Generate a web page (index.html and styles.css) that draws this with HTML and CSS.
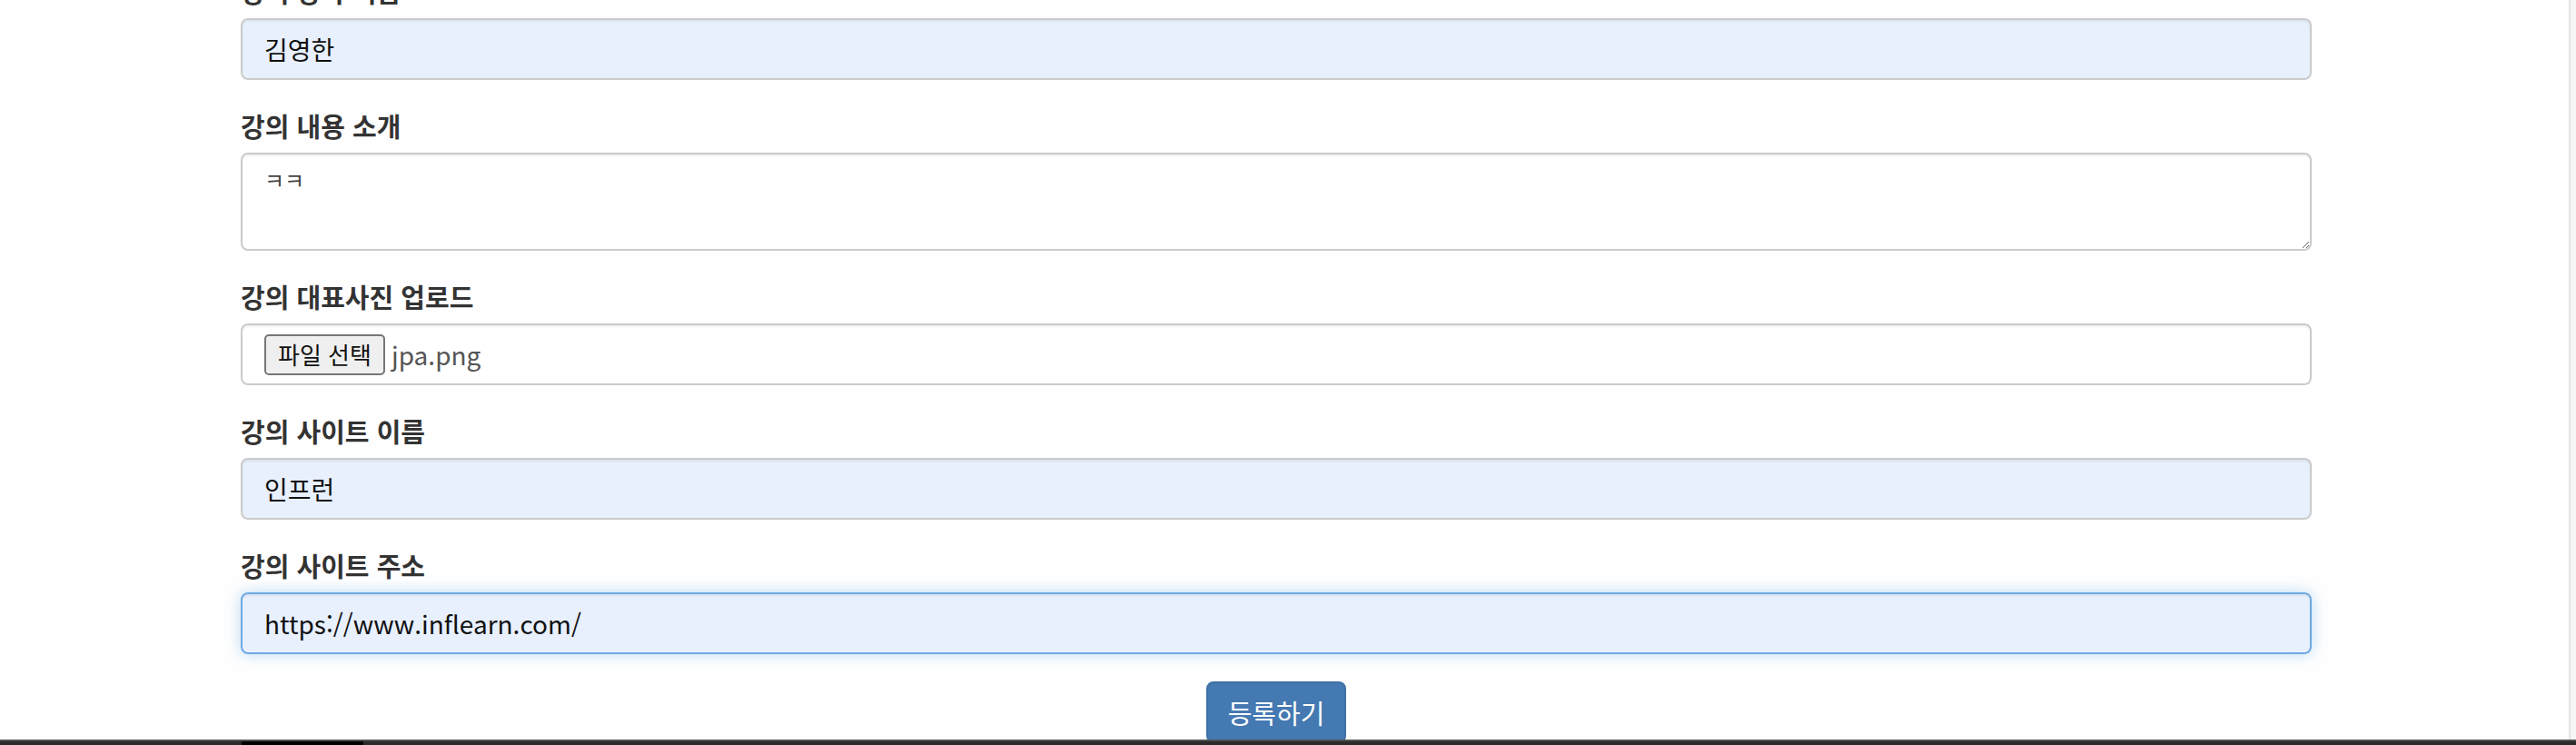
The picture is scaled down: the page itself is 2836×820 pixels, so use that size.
FILE: index.html
```html
<!DOCTYPE html>
<html lang="ko">
<head>
<meta charset="utf-8">
<title>강의 등록</title>
<link rel="stylesheet" href="styles.css">
</head>
<body>
<div class="page">
  <main class="content">
    <form class="form">
      <div class="group">
        <label class="label" for="teacher">강의 강사 이름</label>
        <input class="control autofill" id="teacher" type="text" value="김영한">
      </div>
      <div class="group">
        <label class="label" for="intro">강의 내용 소개</label>
        <textarea class="control area" id="intro" rows="2">ㅋㅋ</textarea>
      </div>
      <div class="group">
        <label class="label">강의 대표사진 업로드</label>
        <div class="control file">
          <button class="file-btn" type="button">파일 선택</button>
          <span class="file-name">jpa.png</span>
        </div>
      </div>
      <div class="group">
        <label class="label" for="site">강의 사이트 이름</label>
        <input class="control autofill" id="site" type="text" value="인프런">
      </div>
      <div class="group">
        <label class="label" for="url">강의 사이트 주소</label>
        <input class="control autofill focused" id="url" type="text" value="https://www.inflearn.com/">
      </div>
      <div class="actions">
        <button class="submit" type="submit">등록하기</button>
      </div>
    </form>
  </main>
  <div class="scrollbar"></div>
</div>
<div class="taskbar"><span class="taskbar-item"></span></div>
</body>
</html>
```
FILE: styles.css
```css
* { box-sizing: border-box; }

html, body {
  margin: 0;
  padding: 0;
  background: #fefefe;
}

body {
  font-family: "Noto Sans CJK KR", "Liberation Sans", sans-serif;
  color: #333;
  overflow: hidden;
}

.page {
  display: flex;
  height: 820px;
  overflow: hidden;
}

.content {
  flex: 1;
  padding: 0 0 0 265px;
}

.form {
  width: 2280px;
  margin-top: -30px;
}

.group {
  margin-bottom: 30px;
}

.label {
  display: block;
  height: 40px;
  line-height: 40px;
  margin-bottom: 10px;
  font-size: 29px;
  font-weight: 700;
  color: #333;
  white-space: nowrap;
}

.control {
  display: block;
  width: 100%;
  height: 68px;
  padding: 0 24px;
  border: 2px solid #cbcbcb;
  border-radius: 8px;
  background: #fff;
  box-shadow: inset 0 2px 2px rgba(0, 0, 0, 0.06);
  font-family: "Noto Sans CJK KR", "Liberation Sans", sans-serif;
  font-size: 28px;
  color: #111;
  outline: none;
}

.autofill {
  background: #e8f0fe;
}

.focused {
  border-color: #6fa9e2;
  box-shadow: inset 0 2px 2px rgba(0, 0, 0, 0.06), 0 0 16px rgba(102, 175, 233, 0.45);
}

.area {
  height: 108px;
  padding: 8px 24px;
  line-height: 40px;
  font-size: 24px;
  color: #444;
  resize: vertical;
}

.file {
  display: flex;
  align-items: center;
  gap: 7px;
}

.file-btn {
  height: 45px;
  padding: 0 13px;
  border: 2px solid #767676;
  border-radius: 5px;
  background: #efefef;
  color: #111;
  font-family: "Noto Sans CJK KR", sans-serif;
  font-size: 26px;
  line-height: 1;
  white-space: nowrap;
}

.file-name {
  font-size: 28px;
  color: #555;
}

.actions {
  display: flex;
  justify-content: center;
}

.submit {
  height: 68px;
  padding: 0 22px;
  border: 2px solid #3f70a6;
  border-radius: 8px;
  background: #4579b2;
  color: #fff;
  font-family: "Noto Sans CJK KR", sans-serif;
  font-size: 29px;
  line-height: 1;
}

.scrollbar {
  width: 26px;
  flex: none;
  display: flex;
  justify-content: flex-end;
  background: #fefefe;
}

.scrollbar::after {
  content: "";
  width: 6px;
  border-left: 2px solid #e4e4e4;
  background: #f6f6f6;
}

.taskbar {
  position: fixed;
  left: 0;
  right: 0;
  bottom: 0;
  height: 6px;
  display: flex;
  background: #2b2b2b;
  border-top: 2px solid #4e4e4e;
}

.taskbar-item {
  width: 134px;
  margin-left: 266px;
  background: #000;
}
```
